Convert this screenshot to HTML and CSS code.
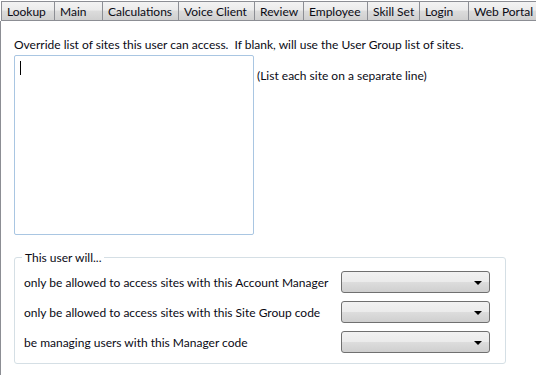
FILE: index.html
```html
<!DOCTYPE html>
<html>
<head>
<meta charset="utf-8">
<link rel="stylesheet" href="styles.css">
</head>
<body>
<div class="tabs">
  <div class="tab">Lookup</div>
  <div class="tab">Main</div>
  <div class="tab">Calculations</div>
  <div class="tab">Voice Client</div>
  <div class="tab">Review</div>
  <div class="tab">Employee</div>
  <div class="tab">Skill Set</div>
  <div class="tab">Login</div>
  <div class="tab">Web Portal</div>
</div>
<div class="panel">
  <p class="intro">Override list of sites this user can access.&nbsp; If blank, will use the User Group list of sites.</p>
  <div class="sites">
    <div class="textbox"><span class="caret"></span></div>
    <span class="note">(List each site on a separate line)</span>
  </div>
  <fieldset class="group">
    <legend>This user will...</legend>
    <div class="row">
      <span class="label">only be allowed to access sites with this Account Manager</span>
      <div class="combo"><span class="arrow"></span></div>
    </div>
    <div class="row">
      <span class="label">only be allowed to access sites with this Site Group code</span>
      <div class="combo"><span class="arrow"></span></div>
    </div>
    <div class="row">
      <span class="label">be managing users with this Manager code</span>
      <div class="combo"><span class="arrow"></span></div>
    </div>
  </fieldset>
</div>
</body>
</html>
```
FILE: styles.css
```css
* { box-sizing: border-box; }
html, body { margin: 0; padding: 0; background: #fff; }
body {
  width: 536px;
  height: 375px;
  overflow: hidden;
  font-family: Lato, "Liberation Sans", sans-serif;
  font-size: 12px;
  color: #0a0a14;
}
.tabs {
  display: grid;
  grid-template-columns: 53px 48px 76px 76px 49px 64px 52px 49px 68px;
  padding-left: 1px;
  height: 21px;
  padding-top: 1px;
}
.tab {
  height: 20px;
  border: 1px solid #8c8e94;
  margin-right: -1px;
  background: linear-gradient(#f3f3f3, #ebebeb 45%, #dcdcdc 50%, #cfcfcf);
  padding: 2px 0 0 5px;
  line-height: 15px;
  white-space: nowrap;
  overflow: hidden;
}
.panel {
  border-left: 1px solid #8c8e94;
  height: 354px;
  padding: 16px 0 0 13px;
}
.intro {
  margin: 0;
  line-height: 16px;
  height: 18px;
}
.sites {
  display: flex;
  align-items: flex-start;
  gap: 3px;
}
.textbox {
  width: 240px;
  height: 180px;
  border: 1px solid #a9c6e2;
  border-radius: 2px;
  padding: 5px 0 0 5px;
}
.caret {
  display: block;
  width: 1px;
  height: 14px;
  background: #000;
}
.note {
  margin-top: 13px;
  line-height: 16px;
}
.group {
  margin: 15px 0 0 0;
  width: 492px;
  border: 1px solid #d5dfe5;
  border-radius: 3px;
  padding: 6px 15px 10px 9px;
  display: flex;
  flex-direction: column;
  gap: 8px;
}
.group legend {
  margin-left: -2px;
  padding: 0 3px;
  line-height: 15px;
}
.row {
  display: flex;
  align-items: center;
  justify-content: space-between;
  height: 22px;
}
.label { white-space: nowrap; }
.combo {
  position: relative;
  width: 149px;
  height: 22px;
  border: 1px solid #707070;
  border-radius: 3px;
  background: linear-gradient(#f2f2f2, #ebebeb 50%, #dddddd 51%, #cfcfcf);
}
.arrow {
  position: absolute;
  right: 7px;
  top: 9px;
  width: 0;
  height: 0;
  border-left: 4px solid transparent;
  border-right: 4px solid transparent;
  border-top: 4px solid #000;
}
```
